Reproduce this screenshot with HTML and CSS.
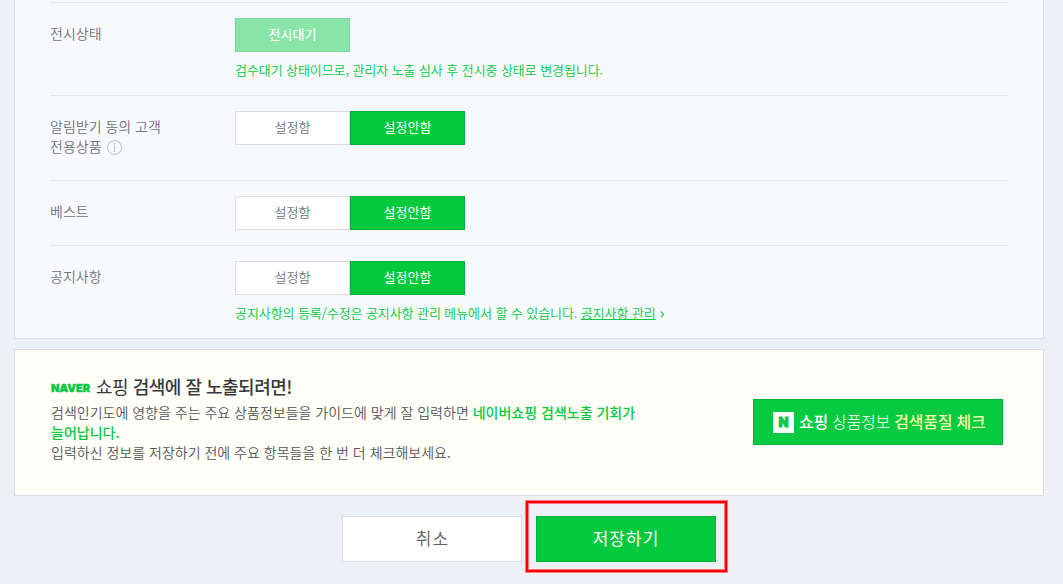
FILE: index.html
```
<!DOCTYPE html>
<html lang="ko">
<head>
    <meta charset="UTF-8">
    <meta name="viewport" content="width=device-width, initial-scale=1.0">
    <title>상품 등록</title>
    <link rel="stylesheet" href="styles.css">
</head>
<body>
    <div class="container">
        <!-- 노출 설정 -->
        <div class="panel">
            <div class="form-row">
                <div class="form-label">전시상태</div>
                <div class="form-content">
                    <div class="btn-group">
                        <button class="btn btn-primary" disabled>전시대기</button>
                    </div>
                    <p class="help-text">검수대기 상태이므로, 관리자 노출 심사 후 전시중 상태로 변경됩니다.</p>
                </div>
            </div>
            <div class="form-row row-agree">
                <div class="form-label">알림받기 동의 고객<br>전용상품
                    <svg class="icon-info" width="15" height="15" viewBox="0 0 15 15">
                        <circle cx="7.5" cy="7.5" r="7" fill="none" stroke="#b9bcc8"/>
                        <path d="M7.5 3v1.5M7.5 6v6" stroke="#b9bcc8"/>
                    </svg>
                </div>
                <div class="form-content">
                    <div class="btn-group">
                        <button class="btn">설정함</button>
                        <button class="btn btn-primary">설정안함</button>
                    </div>
                </div>
            </div>
            <div class="form-row">
                <div class="form-label">베스트</div>
                <div class="form-content">
                    <div class="btn-group">
                        <button class="btn">설정함</button>
                        <button class="btn btn-primary">설정안함</button>
                    </div>
                </div>
            </div>
            <div class="form-row">
                <div class="form-label">공지사항</div>
                <div class="form-content">
                    <div class="btn-group">
                        <button class="btn">설정함</button>
                        <button class="btn btn-primary">설정안함</button>
                    </div>
                    <p class="help-text">공지사항의 등록/수정은 공지사항 관리 메뉴에서 할 수 있습니다. <a href="#">공지사항 관리</a><svg class="icon-arrow" width="5" height="7" viewBox="0 0 5 7"><path d="M1 .7l2.6 2.8L1 6.3" fill="none" stroke="#35cc5c" stroke-width="1.2"/></svg></p>
                </div>
            </div>
        </div>

        <!-- 검색품질 안내 -->
        <div class="notice">
            <div class="notice-text">
                <h2><span class="naver">NAVER</span><span class="title-light">쇼핑</span> 검색에 잘 노출되려면!</h2>
                <p>검색인기도에 영향을 주는 주요 상품정보들을 가이드에 맞게 잘 입력하면 <strong>네이버쇼핑 검색노출 기회가<br>늘어납니다.</strong><br>입력하신 정보를 저장하기 전에 주요 항목들을 한 번 더 체크해보세요.</p>
            </div>
            <button class="btn-check"><span class="n-logo">N</span><span class="check-text"><b>쇼핑</b> 상품정보 <em>검색품질 체크</em></span></button>
        </div>

        <!-- 하단 버튼 -->
        <div class="footer-buttons">
            <button class="btn-large">취소</button>
            <button class="btn-large btn-save">저장하기</button>
        </div>
    </div>
</body>
</html>
```
FILE: styles.css
```
* {
    box-sizing: border-box;
}

body {
    margin: 0;
    height: 584px;
    overflow: hidden;
    background-color: #edf0f5;
    font-family: "Noto Sans CJK KR", sans-serif;
    font-weight: 350;
}

p,
h2 {
    margin: 0;
}

button {
    font-family: inherit;
    font-weight: inherit;
    padding: 0;
    cursor: pointer;
}

.container {
    width: 1030px;
    margin-left: 14px;
}

/* 설정 영역 */
.panel {
    height: 339px;
    padding: 2px 35px 0;
    background-color: #f8f9fd;
    border: 1px solid #dbdde2;
    border-top: none;
}

.form-row {
    display: flex;
    padding: 15px 0;
    border-top: 1px solid #e3e6eb;
}

.form-label {
    width: 185px;
    padding-top: 5px;
    font-size: 14px;
    line-height: 20px;
    color: #70737c;
}

.row-agree {
    height: 85px;
}

.icon-info {
    margin-left: 2px;
    vertical-align: -3px;
}

.btn-group {
    display: flex;
}

.btn {
    width: 115px;
    height: 34px;
    padding-bottom: 3px;
    border: 1px solid #dbdde2;
    background-color: #fff;
    color: #70737c;
    font-size: 13px;
}

.btn-primary {
    background-color: #03c93d;
    border-color: #05b038;
    color: #fff;
    font-weight: 400;
}

.btn-primary:disabled {
    background-color: #89e4a7;
    border-color: #7fd69b;
    color: #f4fff7;
    font-weight: 500;
}

.help-text {
    margin-top: 8px;
    font-size: 13px;
    line-height: 20px;
    letter-spacing: -0.08px;
    color: #03c93d;
    white-space: nowrap;
}

.help-text a {
    color: inherit;
}

.icon-arrow {
    margin-left: 4px;
}

/* 안내 박스 */
.notice {
    display: flex;
    justify-content: space-between;
    height: 147px;
    margin-top: 10px;
    padding: 24px 40px 0 36px;
    background-color: #fffff7;
    border: 1px solid #dbdde2;
}

.notice h2 {
    font-size: 18px;
    font-weight: 500;
    line-height: 24px;
    letter-spacing: -0.5px;
    color: #36383e;
}

.naver {
    display: inline-block;
    width: 45px;
    font-family: Inter, sans-serif;
    font-size: 11px;
    font-weight: 900;
    letter-spacing: 0;
    color: #03c93d;
    vertical-align: 2px;
    -webkit-text-stroke: 0.4px #03c93d;
}

.title-light {
    font-weight: 400;
}

.notice p {
    margin-top: 2px;
    font-size: 14px;
    line-height: 20px;
    color: #53555d;
    white-space: nowrap;
}

.notice strong {
    font-weight: 500;
    color: #03c93d;
}

.btn-check {
    display: flex;
    align-items: center;
    width: 250px;
    height: 46px;
    margin-top: 25px;
    padding-left: 19px;
    background-color: #06cb40;
    border: 1px solid #05b038;
    color: #fff;
    font-size: 16px;
    font-weight: 300;
}

.n-logo {
    width: 21px;
    height: 21px;
    margin-right: 5px;
    background-color: #fff;
    color: #06cb40;
    font: 900 13px/21px Inter, sans-serif;
    -webkit-text-stroke: 0.8px #06cb40;
}

.check-text {
    padding-bottom: 2px;
    letter-spacing: -0.25px;
    white-space: nowrap;
}

.check-text b {
    font-weight: 500;
}

.check-text em {
    font-style: normal;
    font-weight: 500;
    color: #f4fba6;
}

/* 하단 버튼 */
.footer-buttons {
    display: flex;
    gap: 14px;
    margin: 20px 0 0 328px;
}

.btn-large {
    width: 180px;
    height: 46px;
    padding: 0 0 4px 1px;
    border: 1px solid #dbdde2;
    background-color: #fff;
    color: #5d6068;
    font-size: 17px;
    letter-spacing: 1px;
}

.btn-save {
    position: relative;
    padding-left: 0;
    background-color: #03c93d;
    border-color: #05b038;
    color: #fff;
    font-weight: 400;
}

/* 강조 테두리 */
.btn-save::after {
    content: "";
    position: absolute;
    inset: -16px -12px -11px -11px;
    border: 2px solid #f00;
    box-shadow: 0 0 0 1px rgba(255, 0, 0, 0.5), inset 0 0 0 1px rgba(255, 0, 0, 0.5);
}
```
